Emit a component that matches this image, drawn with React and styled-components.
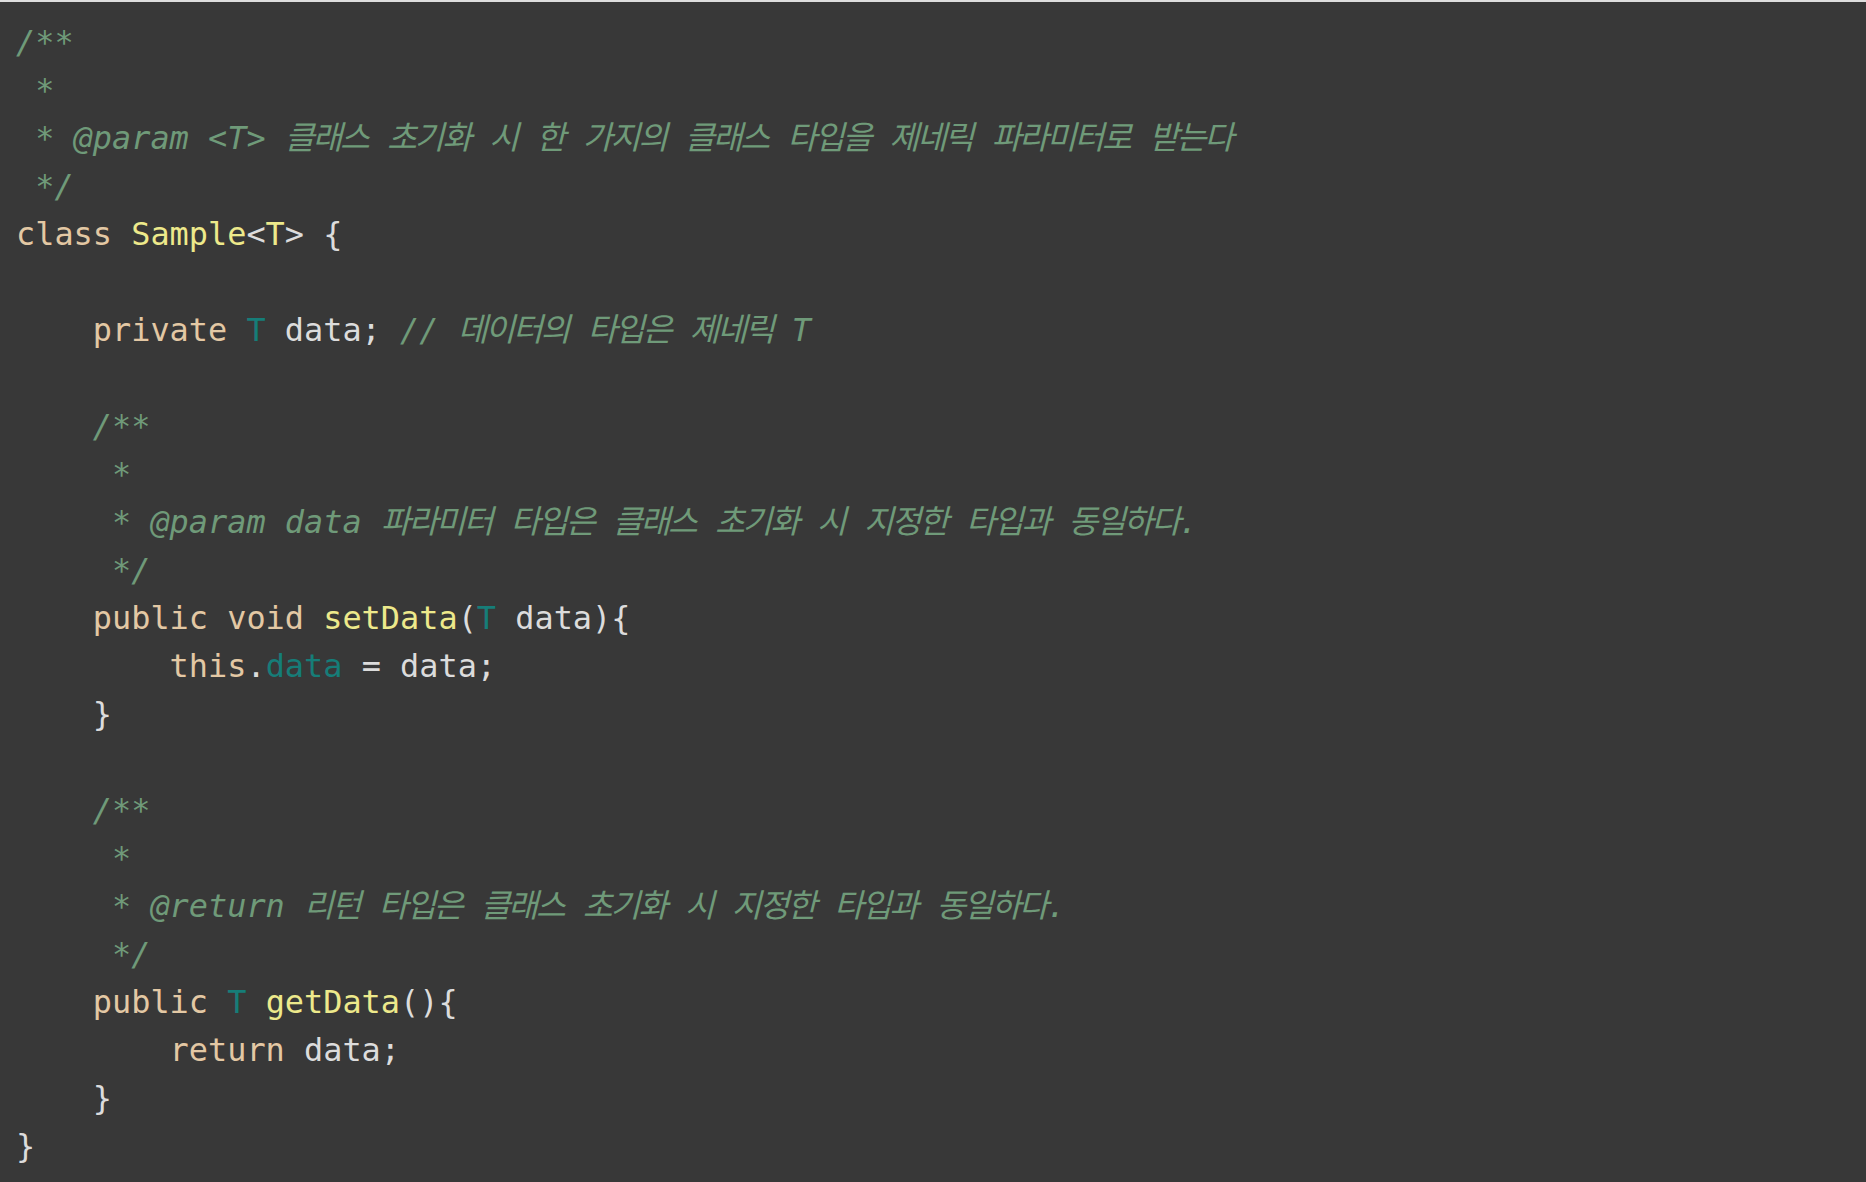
import React from "react";
import styled, { createGlobalStyle } from "styled-components";

const Global = createGlobalStyle`
  html, body { margin: 0; padding: 0; background: #383838; }
  body { width: 1866px; height: 1182px; overflow: hidden; }
`;

const Editor = styled.div`
  box-sizing: border-box;
  width: 1866px;
  height: 1182px;
  background: #383838;
  border-top: 2px solid #dedede;
  padding: 16px 0 0 16px;
  font-family: "DejaVu Sans Mono", "Noto Sans CJK KR", monospace;
  font-size: 31.9px;
  color: #dcdcdc;
`;

const Line = styled.div`
  height: 48px;
  line-height: 48px;
  white-space: pre;
`;

const colors = {
  plain: "#dcdcdc",
  kw: "#e3c8a4",
  name: "#ede98b",
  type: "#167d78",
  comment: "#6f9a79",
};

const Tok = styled.span`
  color: ${(p) => colors[p.$k] || colors.plain};
  font-style: ${(p) => (p.$k === "comment" ? "italic" : "normal")};
`;

const Ko = styled.span`
  font-size: 32.5px;
  letter-spacing: -2.25px;
`;

function Text({ children }) {
  const parts = String(children).split(/([\uAC00-\uD7A3]+)/);
  return parts.map((p, i) =>
    /[\uAC00-\uD7A3]/.test(p) ? <Ko key={i}>{p}</Ko> : <React.Fragment key={i}>{p}</React.Fragment>
  );
}

const code = [
  [["comment", "/**"]],
  [["comment", " *"]],
  [["comment", " * @param <T> 클래스 초기화 시 한 가지의 클래스 타입을 제네릭 파라미터로 받는다"]],
  [["comment", " */"]],
  [["kw", "class "], ["name", "Sample"], ["plain", "<"], ["name", "T"], ["plain", "> {"]],
  [],
  [["plain", "    "], ["kw", "private "], ["type", "T"], ["plain", " data; "], ["comment", "// 데이터의 타입은 제네릭 T"]],
  [],
  [["comment", "    /**"]],
  [["comment", "     *"]],
  [["comment", "     * @param data 파라미터 타입은 클래스 초기화 시 지정한 타입과 동일하다."]],
  [["comment", "     */"]],
  [["plain", "    "], ["kw", "public void "], ["name", "setData"], ["plain", "("], ["type", "T"], ["plain", " data){"]],
  [["plain", "        "], ["kw", "this"], ["plain", "."], ["type", "data"], ["plain", " = data;"]],
  [["plain", "    }"]],
  [],
  [["comment", "    /**"]],
  [["comment", "     *"]],
  [["comment", "     * @return 리턴 타입은 클래스 초기화 시 지정한 타입과 동일하다."]],
  [["comment", "     */"]],
  [["plain", "    "], ["kw", "public "], ["type", "T"], ["plain", " "], ["name", "getData"], ["plain", "(){"]],
  [["plain", "        "], ["kw", "return "], ["plain", "data;"]],
  [["plain", "    }"]],
  [["plain", "}"]],
];

export default function App() {
  return (
    <>
      <Global />
      <Editor>
        {code.map((line, i) => (
          <Line key={i}>
            {line.length === 0
              ? " "
              : line.map(([k, t], j) => (
                  <Tok key={j} $k={k}>
                    <Text>{t}</Text>
                  </Tok>
                ))}
          </Line>
        ))}
      </Editor>
    </>
  );
}
